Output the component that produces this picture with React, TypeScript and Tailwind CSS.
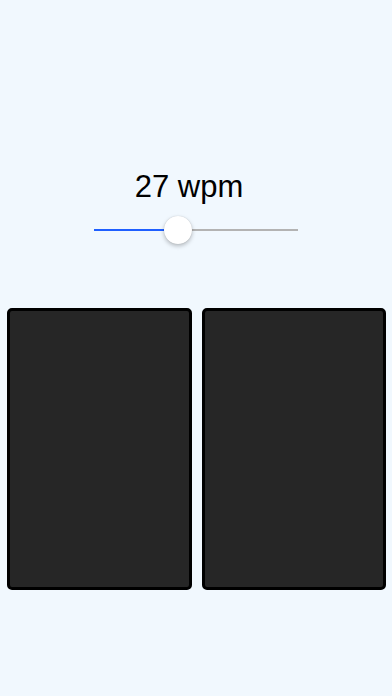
export default function App() {
  const pct = 41;
  return (
    <main
      className="min-h-screen w-full bg-[#f1f8fe] flex flex-col items-center pt-[169px]"
      style={{ fontFamily: '"Liberation Sans", Arial, sans-serif' }}
    >
      <div className="pr-[14px] text-[31px] leading-[36px] text-black">27 wpm</div>

      {/* slider */}
      <div className="relative mt-[11px] h-[28px] w-[204px]">
        <div className="absolute left-0 right-0 top-[13px] h-[2px] bg-[#b3b3b3]" />
        <div
          className="absolute left-0 top-[13px] h-[2px] bg-[#1f5fff]"
          style={{ width: `${pct}%` }}
        />
        <div
          className="absolute top-0 h-[28px] w-[28px] -translate-x-1/2 rounded-full bg-white shadow-[0_2px_4px_rgba(0,0,0,0.25),0_0_1px_rgba(0,0,0,0.2)]"
          style={{ left: `${pct}%` }}
        />
      </div>

      <div className="mt-[64px] flex w-full gap-[10px] px-[7px] pr-[6px]">
        <div className="h-[282px] flex-1 rounded-[5px] border-[3px] border-black bg-[#262626]" />
        <div className="h-[282px] flex-1 rounded-[5px] border-[3px] border-black bg-[#262626]" />
      </div>
    </main>
  );
}
